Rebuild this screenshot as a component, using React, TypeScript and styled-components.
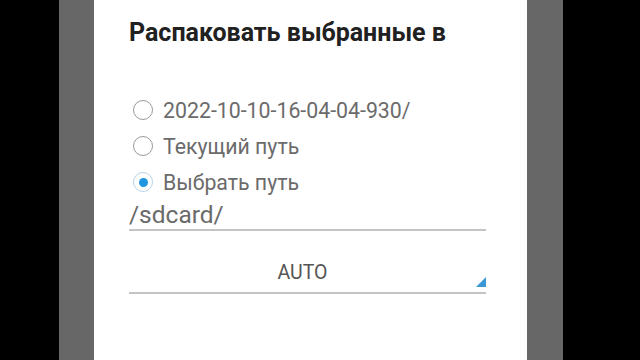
import React, { useState } from "react";
import styled, { createGlobalStyle } from "styled-components";

const GlobalStyle = createGlobalStyle`
  html, body {
    margin: 0;
    padding: 0;
    background: #000;
  }
  body {
    font-family: Roboto, "Noto Sans", sans-serif;
  }
`;

const Screen = styled.div`
  display: flex;
  width: 640px;
  height: 360px;
  background: #000;
  overflow: hidden;
`;

const Side = styled.div<{ $w: number }>`
  width: ${(p) => p.$w}px;
  flex-shrink: 0;
  background: #000;
`;

const Dim = styled.div<{ $w: number }>`
  width: ${(p) => p.$w}px;
  flex-shrink: 0;
  background: #676767;
`;

const Dialog = styled.div`
  width: 433px;
  flex-shrink: 0;
  background: #fff;
  box-sizing: border-box;
  padding: 19px 41px 0 35px;
  display: flex;
  flex-direction: column;
`;

const Title = styled.h1`
  margin: 0;
  font-size: 25px;
  line-height: 28px;
  font-weight: 700;
  color: #212121;
`;

const RadioGroup = styled.div`
  margin-top: 45px;
  display: flex;
  flex-direction: column;
`;

const Row = styled.label`
  height: 36px;
  display: flex;
  align-items: center;
  gap: 10px;
  padding-left: 4px;
  cursor: pointer;
`;

const Circle = styled.span<{ $on: boolean }>`
  width: 20px;
  height: 20px;
  box-sizing: border-box;
  border-radius: 50%;
  border: 1.5px solid ${(p) => (p.$on ? "#b9d3e6" : "#9a9a9a")};
  display: flex;
  align-items: center;
  justify-content: center;
  &::after {
    content: "";
    width: 9px;
    height: 9px;
    border-radius: 50%;
    background: ${(p) => (p.$on ? "#2196e0" : "transparent")};
  }
`;

const RowText = styled.span`
  font-size: 21.3px;
  color: #6b6b6b;
`;

const PathField = styled.div`
  font-size: 24.5px;
  line-height: 29px;
  color: #6a6a6a;
  border-bottom: 2px solid #c4c4c4;
`;

const Spinner = styled.div`
  position: relative;
  padding: 31px 10px 8px 0;
  text-align: center;
  font-size: 19.5px;
  line-height: 22px;
  font-weight: 400;
  color: #555;
  border-bottom: 2px solid #c4c4c4;
`;

const Corner = styled.svg`
  position: absolute;
  right: 0;
  bottom: 5px;
`;

const options = ["2022-10-10-16-04-04-930/", "Текущий путь", "Выбрать путь"];

export default function App() {
  const [sel, setSel] = useState(2);
  return (
    <Screen>
      <GlobalStyle />
      <Side $w={59} />
      <Dim $w={35} />
      <Dialog>
        <Title>Распаковать выбранные в</Title>
        <RadioGroup>
          {options.map((o, i) => (
            <Row key={o} onClick={() => setSel(i)}>
              <Circle $on={sel === i} />
              <RowText>{o}</RowText>
            </Row>
          ))}
        </RadioGroup>
        <PathField>/sdcard/</PathField>
        <Spinner>
          AUTO
          <Corner width="10" height="10" viewBox="0 0 10 10">
            <polygon points="10,0 10,10 0,10" fill="#3a98d4" />
          </Corner>
        </Spinner>
      </Dialog>
      <Dim $w={36} />
      <Side $w={77} />
    </Screen>
  );
}
